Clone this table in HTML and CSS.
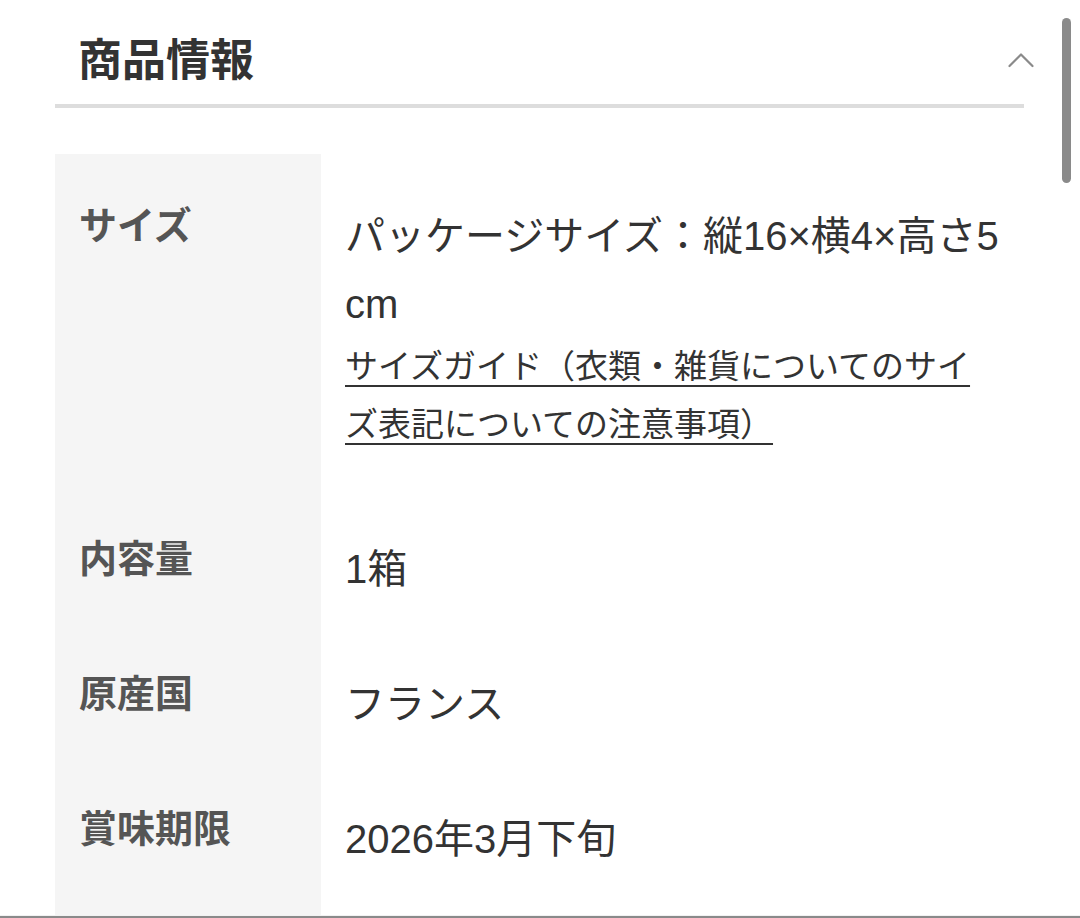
FILE: index.html
```html
<!DOCTYPE html>
<html lang="ja">
<head>
<meta charset="utf-8">
<title>商品情報</title>
<link rel="stylesheet" href="styles.css">
</head>
<body>
<div class="page">
  <section class="panel">
    <header class="panel-head">
      <h2 class="panel-title">商品情報</h2>
      <svg class="chevron" width="26" height="16" viewBox="0 0 26 16" aria-hidden="true">
        <polyline points="1.5,14 13,2.5 24.5,14" fill="none" stroke="#8a8a8a" stroke-width="2.2" stroke-linecap="round" stroke-linejoin="round"/>
      </svg>
    </header>
    <dl class="spec">
      <dt class="spec-label">サイズ</dt>
      <dd class="spec-value">
        <p class="spec-text">パッケージサイズ：縦16×横4×高さ5cm</p>
        <a class="spec-link" href="#">サイズガイド（衣類・雑貨についてのサイズ表記についての注意事項）</a>
      </dd>
      <dt class="spec-label">内容量</dt>
      <dd class="spec-value"><p class="spec-text">1箱</p></dd>
      <dt class="spec-label">原産国</dt>
      <dd class="spec-value"><p class="spec-text">フランス</p></dd>
      <dt class="spec-label">賞味期限</dt>
      <dd class="spec-value"><p class="spec-text">2026年3月下旬</p></dd>
    </dl>
  </section>
  <div class="scrollbar"></div>
  <div class="bottom-edge"></div>
</div>
</body>
</html>
```
FILE: styles.css
```css
html, body {
  margin: 0;
  padding: 0;
  background: #ffffff;
}
body {
  font-family: "Liberation Sans", "Noto Sans CJK JP", sans-serif;
  color: #333333;
  height: 918px;
  overflow: hidden;
}
.page {
  height: 918px;
  overflow: hidden;
}
.panel {
  padding: 0 56px 0 55px;
}
.panel-head {
  display: flex;
  align-items: center;
  justify-content: space-between;
  padding-top: 14px;
  height: 90px;
  border-bottom: 4px solid #dddddd;
}
.panel-title {
  margin: -4px 0 0 23px;
  font-family: "Noto Sans CJK JP", sans-serif;
  font-size: 44px;
  font-weight: 700;
  line-height: 90px;
  color: #333333;
}
.chevron {
  margin-right: -10px;
  margin-top: 2px;
}
.spec {
  display: grid;
  grid-template-columns: 266px 1fr;
  margin: 46px 0 0;
}
.spec-label {
  background: #f5f5f5;
  margin: 0;
  padding: 0 24px 67px;
  font-family: "Noto Sans CJK JP", sans-serif;
  font-size: 38px;
  font-weight: 700;
  line-height: 42px;
  color: #555555;
}
.spec-value {
  margin: 0;
  padding: 0 24px 67px;
}
.spec-label:first-of-type,
.spec-label:first-of-type + .spec-value {
  padding-top: 48px;
}
.spec-text {
  margin: 0;
  font-size: 40px;
  line-height: 68px;
  color: #333333;
  word-break: break-all;
}
.spec-link {
  display: block;
  margin-bottom: 14px;
  font-size: 33px;
  line-height: 58px;
  color: #333333;
  text-decoration: underline;
  text-decoration-thickness: 2px;
  text-underline-offset: 7px;
}
.scrollbar {
  position: fixed;
  top: 18px;
  left: 1062px;
  width: 9px;
  height: 165px;
  border-radius: 5px;
  background: #8a8a8a;
}
.bottom-edge {
  position: fixed;
  left: 0;
  right: 0;
  bottom: 0;
  height: 3px;
  background: #f2f2f2;
  box-shadow: inset 0 -2px 0 #8a8a8a;
}
```
